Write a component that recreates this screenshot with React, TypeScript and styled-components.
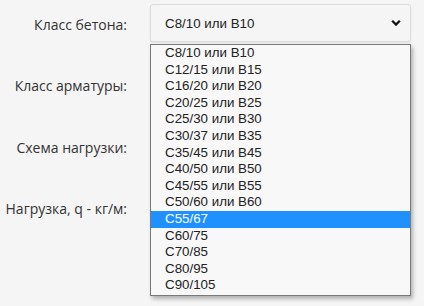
import React from "react";
import styled, { createGlobalStyle } from "styled-components";

const Global = createGlobalStyle`
  html, body { margin: 0; padding: 0; background: #f5f5f5; }
  body { font-family: "Open Sans", "Liberation Sans", sans-serif; }
`;

const Page = styled.div`
  width: 424px;
  height: 306px;
  overflow: hidden;
  position: relative;
  background: #f5f5f5;
`;

const Form = styled.div`
  display: grid;
  grid-template-columns: 127px 261px;
  column-gap: 23px;
  row-gap: 23.5px;
  padding-top: 4px;
  position: relative;
`;

const Label = styled.div`
  height: 38px;
  display: flex;
  align-items: center;
  justify-content: flex-end;
  padding-top: 2px;
  box-sizing: border-box;
  font-size: 14px;
  color: #333;
  white-space: nowrap;
`;

const Field = styled.div`
  position: relative;
  height: 38px;
`;

const SelectBox = styled.div`
  height: 38px;
  box-sizing: border-box;
  border: 1px solid #dcdcdc;
  border-radius: 3px;
  background: #f5f5f5;
  box-shadow: 0 1px 2px rgba(0, 0, 0, 0.08);
  display: flex;
  align-items: center;
  justify-content: space-between;
  padding: 0 6px 0 14px;
  font-family: "Liberation Sans", Arial, sans-serif;
  font-size: 13.33px;
  color: #222;
`;

const Chevron = styled.svg`
  width: 10px;
  height: 8px;
  margin-right: 3px;
`;

const Popup = styled.ul`
  position: absolute;
  left: 0;
  top: 40px;
  width: 261px;
  margin: 0;
  padding: 0 0 1px;
  list-style: none;
  box-sizing: border-box;
  border: 1px solid #7a7a7a;
  background: #f8f8f8;
  box-shadow: 2px 3px 4px rgba(0, 0, 0, 0.28);
  z-index: 10;
  font-family: "Liberation Sans", Arial, sans-serif;
  font-size: 13.33px;
`;

const Option = styled.li<{ $selected?: boolean }>`
  height: 16.6px;
  line-height: 16.6px;
  padding-left: 14px;
  color: ${(p) => (p.$selected ? "#fff" : "#222")};
  background: ${(p) => (p.$selected ? "#1e90ff" : "transparent")};
  white-space: nowrap;
`;

const options = [
  "C8/10 или B10",
  "C12/15 или B15",
  "C16/20 или B20",
  "C20/25 или B25",
  "C25/30 или B30",
  "C30/37 или B35",
  "C35/45 или B45",
  "C40/50 или B50",
  "C45/55 или B55",
  "C50/60 или B60",
  "C55/67",
  "C60/75",
  "C70/85",
  "C80/95",
  "C90/105",
];

export default function App() {
  return (
    <Page>
      <Global />
      <Form>
        <Label>Класс бетона:</Label>
        <Field>
          <SelectBox>
            <span>C8/10 или B10</span>
            <Chevron viewBox="0 0 10 8">
              <path d="M1.2 1.8 L5 5.6 L8.8 1.8" fill="none" stroke="#111" strokeWidth="2.2" />
            </Chevron>
          </SelectBox>
          <Popup>
            {options.map((o) => (
              <Option key={o} $selected={o === "C55/67"}>
                {o}
              </Option>
            ))}
          </Popup>
        </Field>
        <Label>Класс арматуры:</Label>
        <Field />
        <Label>Схема нагрузки:</Label>
        <Field />
        <Label>Нагрузка, q - кг/м:</Label>
        <Field />
      </Form>
    </Page>
  );
}
